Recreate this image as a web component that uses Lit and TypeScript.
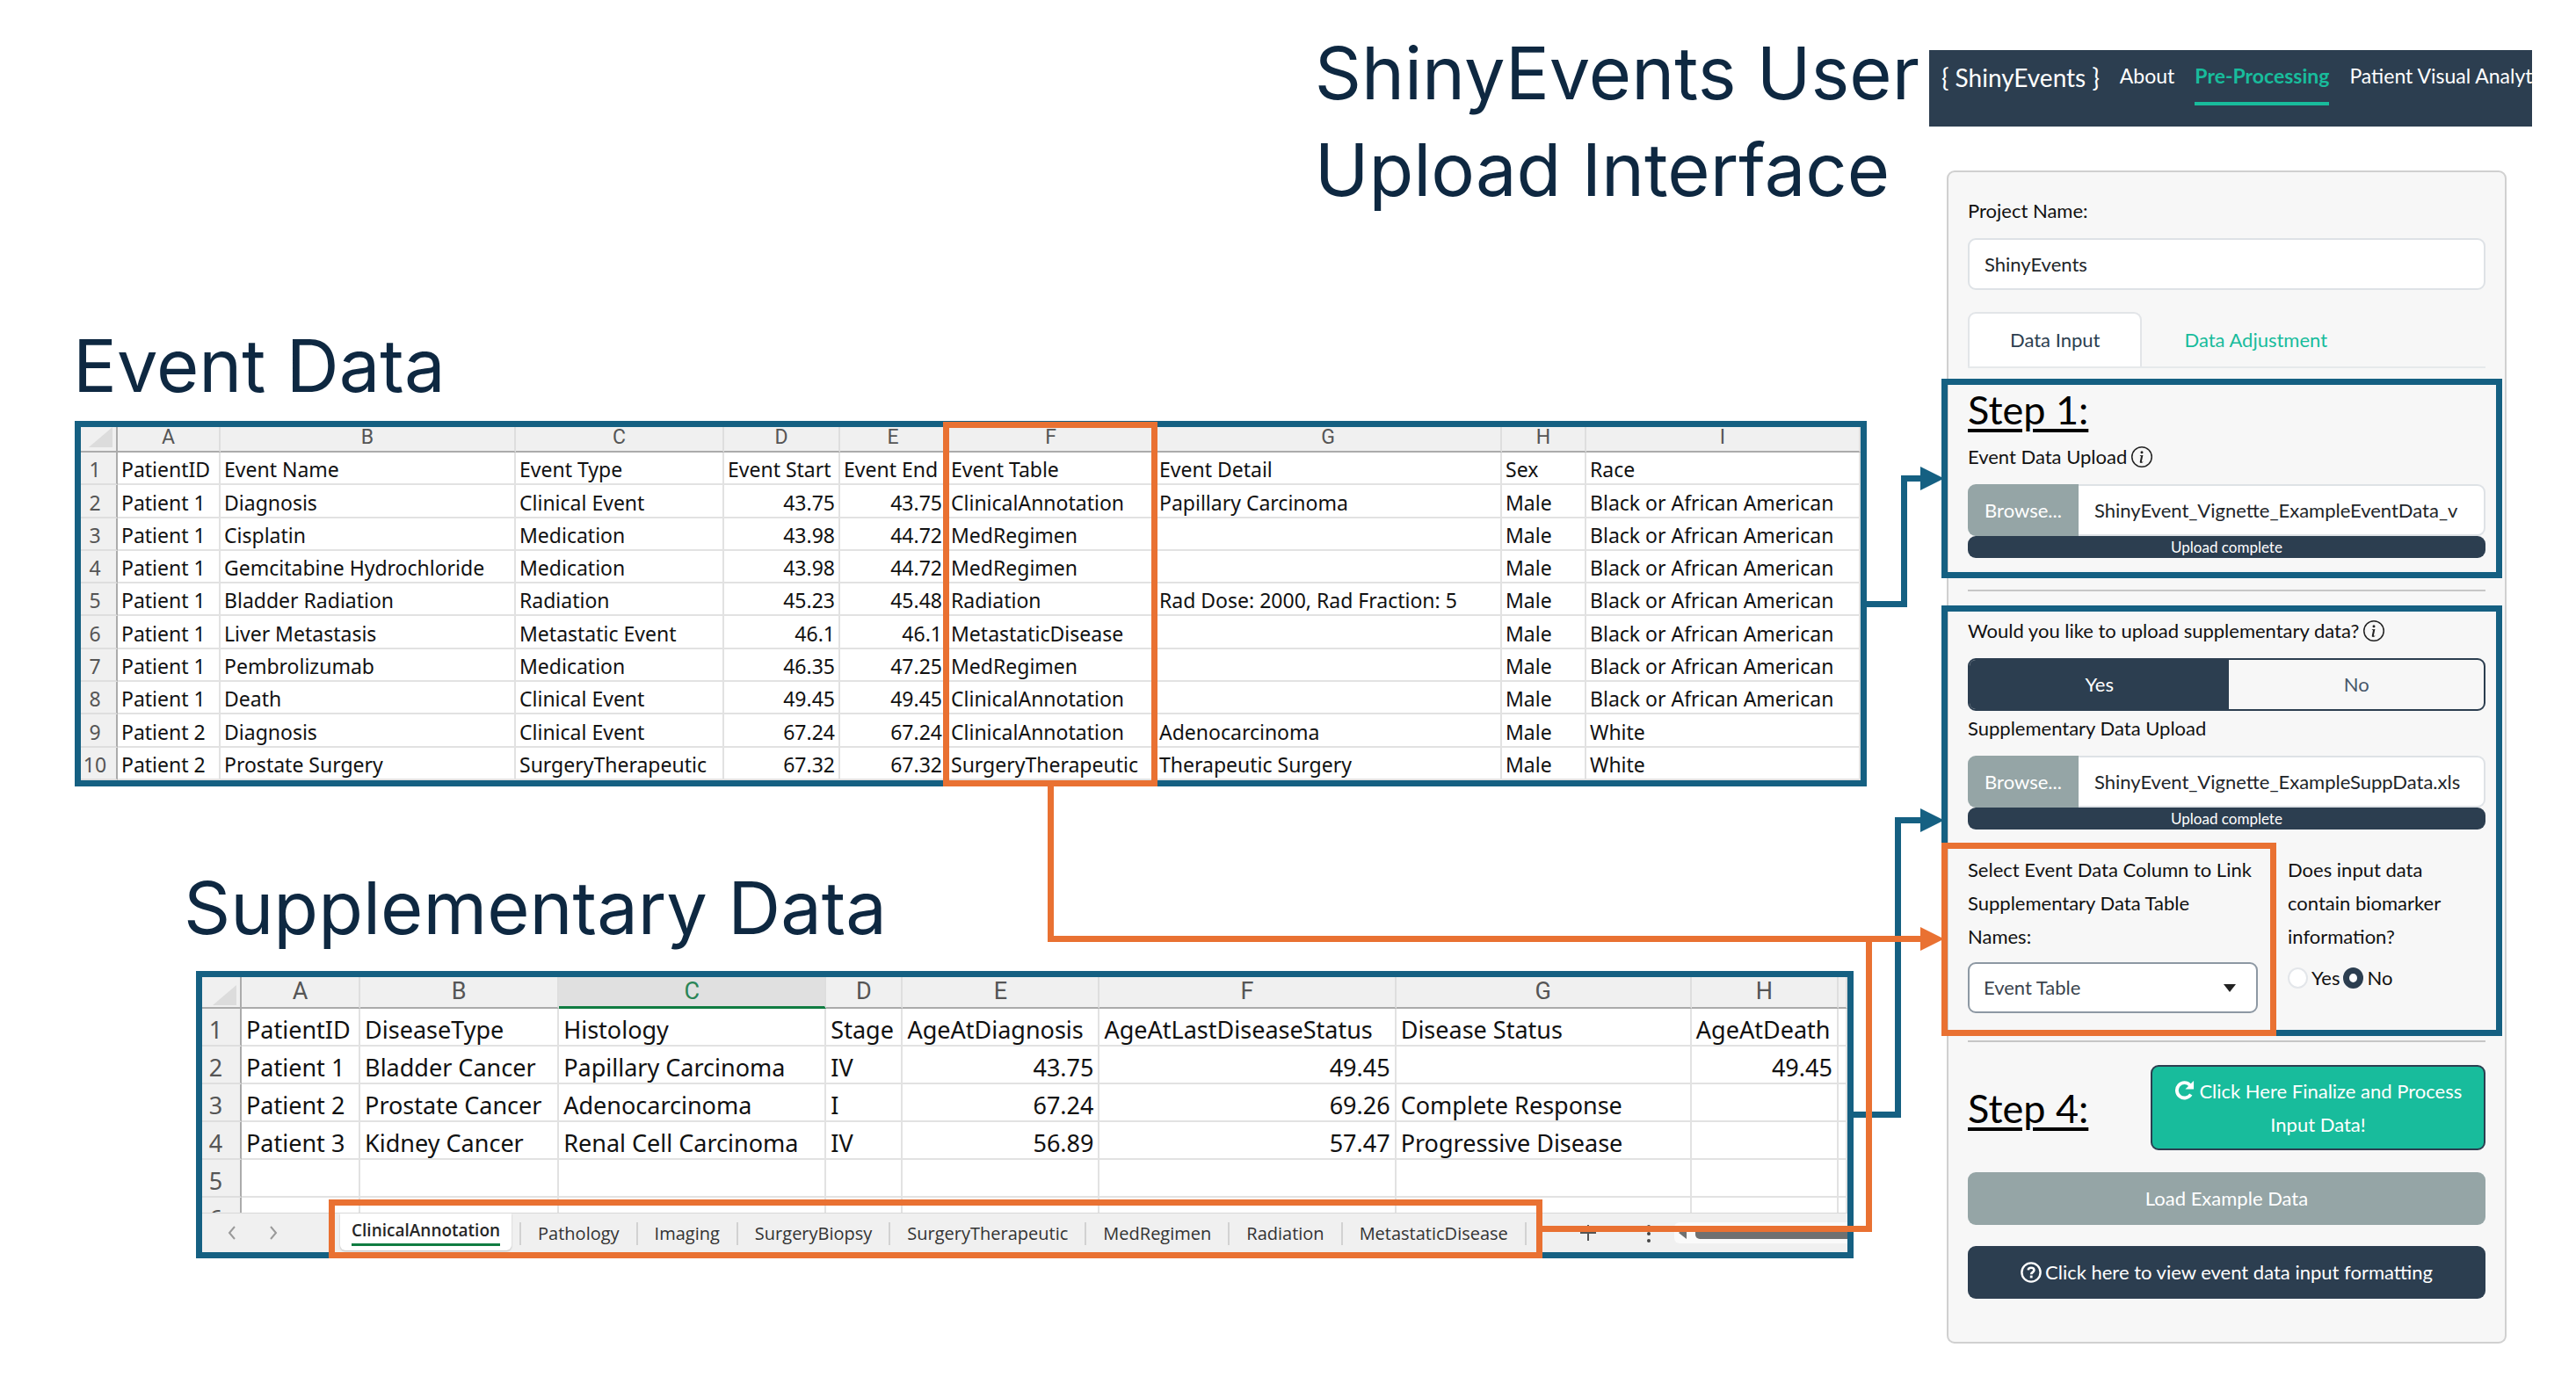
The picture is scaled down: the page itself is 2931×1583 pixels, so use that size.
import { LitElement, html, css, svg, nothing } from "lit";
import { customElement, property, state } from "lit/decorators.js";
import { classMap } from "lit/directives/class-map.js";

interface Column {
  letter: string;
  width: number;
  numeric?: boolean;
  selected?: boolean;
}

const EVENT_COLUMNS: Column[] = [
  { letter: "A", width: 117 },
  { letter: "B", width: 336 },
  { letter: "C", width: 237 },
  { letter: "D", width: 132, numeric: true },
  { letter: "E", width: 122, numeric: true },
  { letter: "F", width: 237 },
  { letter: "G", width: 394 },
  { letter: "H", width: 96 },
  { letter: "I", width: 312 },
];

const BLACK = "Black or African American";

const EVENT_ROWS: string[][] = [
  ["PatientID", "Event Name", "Event Type", "Event Start", "Event End", "Event Table", "Event Detail", "Sex", "Race"],
  ["Patient 1", "Diagnosis", "Clinical Event", "43.75", "43.75", "ClinicalAnnotation", "Papillary Carcinoma", "Male", BLACK],
  ["Patient 1", "Cisplatin", "Medication", "43.98", "44.72", "MedRegimen", "", "Male", BLACK],
  ["Patient 1", "Gemcitabine Hydrochloride", "Medication", "43.98", "44.72", "MedRegimen", "", "Male", BLACK],
  ["Patient 1", "Bladder Radiation", "Radiation", "45.23", "45.48", "Radiation", "Rad Dose: 2000, Rad Fraction: 5", "Male", BLACK],
  ["Patient 1", "Liver Metastasis", "Metastatic Event", "46.1", "46.1", "MetastaticDisease", "", "Male", BLACK],
  ["Patient 1", "Pembrolizumab", "Medication", "46.35", "47.25", "MedRegimen", "", "Male", BLACK],
  ["Patient 1", "Death", "Clinical Event", "49.45", "49.45", "ClinicalAnnotation", "", "Male", BLACK],
  ["Patient 2", "Diagnosis", "Clinical Event", "67.24", "67.24", "ClinicalAnnotation", "Adenocarcinoma", "Male", "White"],
  ["Patient 2", "Prostate Surgery", "SurgeryTherapeutic", "67.32", "67.32", "SurgeryTherapeutic", "Therapeutic Surgery", "Male", "White"],
];

const SUPP_COLUMNS: Column[] = [
  { letter: "A", width: 135 },
  { letter: "B", width: 226 },
  { letter: "C", width: 304, selected: true },
  { letter: "D", width: 87 },
  { letter: "E", width: 224, numeric: true },
  { letter: "F", width: 337, numeric: true },
  { letter: "G", width: 336 },
  { letter: "H", width: 167, numeric: true },
  { letter: "", width: 10 },
];

const SUPP_ROWS: string[][] = [
  ["PatientID", "DiseaseType", "Histology", "Stage", "AgeAtDiagnosis", "AgeAtLastDiseaseStatus", "Disease Status", "AgeAtDeath", ""],
  ["Patient 1", "Bladder Cancer", "Papillary Carcinoma", "IV", "43.75", "49.45", "", "49.45", ""],
  ["Patient 2", "Prostate Cancer", "Adenocarcinoma", "I", "67.24", "69.26", "Complete Response", "", ""],
  ["Patient 3", "Kidney Cancer", "Renal Cell Carcinoma", "IV", "56.89", "57.47", "Progressive Disease", "", ""],
  ["", "", "", "", "", "", "", "", ""],
  ["", "", "", "", "", "", "", "", ""],
];

const SHEETS = [
  "ClinicalAnnotation",
  "Pathology",
  "Imaging",
  "SurgeryBiopsy",
  "SurgeryTherapeutic",
  "MedRegimen",
  "Radiation",
  "MetastaticDisease",
];

@customElement("sheet-grid")
export class SheetGrid extends LitElement {
  @property({ attribute: false }) columns: Column[] = [];
  @property({ attribute: false }) rows: string[][] = [];
  @property({ type: Number }) gutter = 42;
  @property() size = "small";

  static styles = css`
    :host {
      display: block;
      font-family: "Noto Sans", "Open Sans", sans-serif;
      color: #111;
      background: #fff;
    }
    table {
      width: 100%;
      table-layout: fixed;
      border-collapse: separate;
      border-spacing: 0;
    }
    .small {
      height: 402px;
      font-size: 23px;
      line-height: 32px;
    }
    .large {
      font-size: 27px;
      line-height: 34px;
    }
    th {
      padding: 0;
      font-weight: 400;
      color: #555;
      background: #f0f0f0;
      border-right: 2px solid #dedede;
      border-bottom: 2px solid #dedede;
      white-space: nowrap;
    }
    thead th {
      box-sizing: border-box;
      border-bottom-color: #ababab;
      font-family: Roboto, sans-serif;
    }
    .small thead th {
      height: 27px;
      line-height: 23px;
      padding-bottom: 4px;
    }
    .large thead th {
      height: 36px;
      line-height: 31px;
      padding-bottom: 2px;
    }
    tbody th,
    .corner {
      border-right-color: #ababab;
    }
    .corner {
      vertical-align: bottom;
    }
    .corner svg {
      display: block;
      margin-left: auto;
      margin-right: 4px;
      width: 27px;
      height: 23px;
    }
    td {
      padding: 0 4px;
      vertical-align: bottom;
      white-space: nowrap;
      border-right: 2px solid #e2e2e2;
      border-bottom: 2px solid #e2e2e2;
    }
    tbody th {
      vertical-align: bottom;
      padding-right: 8px;
    }
    .large td,
    .large tbody th {
      height: 41px;
      box-sizing: content-box;
    }
    .large td {
      padding: 0 5px;
    }
    .large tbody th {
      padding-right: 12px;
    }
    .numeric {
      text-align: right;
    }
    .large th.selected {
      color: #2a8556;
      background: #e0e0e0;
      border-bottom: 3px solid #107c41;
      padding-bottom: 1px;
    }
  `;

  render() {
    const total = this.gutter + this.columns.reduce((sum, c) => sum + c.width, 0);
    const share = (w: number) => `width:${(w / total) * 100}%`;
    return html`<table class=${this.size}>
      <colgroup>
        <col style=${share(this.gutter)} />
        ${this.columns.map((c) => html`<col style=${share(c.width)} />`)}
      </colgroup>
      <thead>
        <tr>
          <th class="corner">
            <svg viewBox="0 0 27 24" preserveAspectRatio="none" aria-hidden="true">
              <path d="M27 0V24H0Z" fill="#dcdcdc" />
            </svg>
          </th>
          ${this.columns.map(
            (c) => html`<th scope="col" class=${classMap({ selected: !!c.selected })}>${c.letter}</th>`,
          )}
        </tr>
      </thead>
      <tbody>
        ${this.rows.map(
          (row, r) => html`<tr>
            <th scope="row">${r + 1}</th>
            ${row.map(
              (cell, i) =>
                html`<td class=${classMap({ numeric: r > 0 && !!this.columns[i].numeric })}>${cell}</td>`,
            )}
          </tr>`,
        )}
      </tbody>
    </table>`;
  }
}

@customElement("sheet-tabs")
export class SheetTabs extends LitElement {
  @state() private active = 0;

  static styles = css`
    :host {
      display: flex;
      height: 45px;
      background: #f0f0f0;
      border-top: 1px solid #d8d8d8;
      box-sizing: border-box;
      font-family: "Open Sans", "Noto Sans", sans-serif;
      font-size: 20px;
      overflow: hidden;
    }
    button {
      border: 0;
      background: none;
      padding: 0;
      font: inherit;
      color: #333;
    }
    .arrows {
      flex: 0 0 157px;
      display: flex;
      align-items: center;
      padding-left: 27px;
      gap: 37px;
      box-sizing: border-box;
    }
    svg {
      display: block;
    }
    .tabs {
      display: flex;
      align-items: flex-start;
    }
    .tab {
      box-sizing: border-box;
      margin-top: 10px;
      height: 26px;
      padding: 0 19px;
      line-height: 26px;
      border-right: 2px solid #d2d2d2;
      white-space: nowrap;
    }
    .tab.active {
      margin-top: 0;
      margin-right: 9px;
      height: 42px;
      padding: 0 13px;
      background: #fff;
      border: 0;
      border-radius: 0 0 6px 6px;
      box-shadow: 0 1px 2px #bbb;
      font-size: 19px;
      font-weight: 600;
      color: #262626;
    }
    .tab.active + .tab {
      border-left: 2px solid #d2d2d2;
    }
    .tab.active span {
      display: block;
      margin-top: -2px;
      line-height: 30px;
      border-bottom: 3px solid #107c41;
    }
    .tools {
      flex: 1;
      display: flex;
      align-items: center;
      padding-left: 61px;
    }
    .dots {
      margin-left: 57px;
    }
    .bar {
      flex: 1;
      margin-left: 26px;
      height: 24px;
      border-radius: 6px 0 0 6px;
      background: #fafafa;
      display: flex;
      align-items: center;
      gap: 10px;
      padding-left: 5px;
    }
    .thumb {
      flex: 1;
      height: 14px;
      border-radius: 5px 0 0 5px;
      background: #707070;
    }
  `;

  render() {
    return html`<div class="arrows">
        <button aria-label="Previous sheet">
          <svg width="12" height="18" viewBox="0 0 12 18"><path d="M10 2L4 9l6 7" fill="none" stroke="#9a9a9a" stroke-width="2" /></svg>
        </button>
        <button aria-label="Next sheet">
          <svg width="12" height="18" viewBox="0 0 12 18"><path d="M2 2l6 7-6 7" fill="none" stroke="#9a9a9a" stroke-width="2" /></svg>
        </button>
      </div>
      <div class="tabs">
        ${SHEETS.map(
          (name, i) => html`<button
            class=${classMap({ tab: true, active: i === this.active })}
            @click=${() => (this.active = i)}
          ><span>${name}</span></button>`,
        )}
      </div>
      <div class="tools">
        <button aria-label="New sheet">
          <svg width="18" height="18" viewBox="0 0 18 18"><path d="M9 0v18M0 9h18" stroke="#555" stroke-width="2" /></svg>
        </button>
        <svg class="dots" width="6" height="22" viewBox="0 0 6 22" aria-hidden="true">
          <g fill="#444"><circle cx="3" cy="4" r="2" /><circle cx="3" cy="12" r="2" /><circle cx="3" cy="20" r="2" /></g>
        </svg>
        <div class="bar">
          <svg width="9" height="14" viewBox="0 0 9 14" aria-hidden="true"><path d="M9 0v14L0 7z" fill="#707070" /></svg>
          <div class="thumb"></div>
        </div>
      </div>`;
  }
}

const infoIcon = html`<svg class="info" viewBox="0 0 16 16" role="img" aria-label="More information">
  <path
    fill="#222"
    d="M8 15A7 7 0 1 1 8 1a7 7 0 0 1 0 14m0 1A8 8 0 1 0 8 0a8 8 0 0 0 0 16M8.93 6.588l-2.29.287-.082.38.45.083c.294.07.352.176.288.469l-.738 3.468c-.194.897.105 1.319.808 1.319.545 0 1.178-.252 1.465-.598l.088-.416c-.2.176-.492.246-.686.246-.275 0-.375-.193-.304-.533zM9 4.5a1 1 0 1 1-2 0 1 1 0 0 1 2 0"
  />
</svg>`;

@customElement("upload-panel")
export class UploadPanel extends LitElement {
  @state() private supplementary = true;

  static styles = css`
    :host {
      display: block;
      box-sizing: border-box;
      border: 2px solid #d0d0d0;
      border-radius: 9px;
      background: #f7f7f7;
      padding: 25px 22px 49px;
      font-family: Lato, sans-serif;
      font-size: 22px;
      line-height: 38px;
      color: #111;
    }
    button,
    input,
    select {
      font: inherit;
      box-sizing: border-box;
      margin: 0;
    }
    .label {
      display: flex;
      align-items: center;
      gap: 5px;
    }
    .info {
      width: 24px;
      height: 24px;
    }
    .field {
      display: block;
      width: 100%;
      height: 59px;
      padding: 0 17px;
      margin-top: 12px;
      border: 2px solid #dee2e6;
      border-radius: 9px;
      background: #fff;
      color: #212529;
    }
    .tabs {
      display: flex;
      margin-top: 25px;
      border-bottom: 2px solid #e6e9eb;
    }
    .tab {
      height: 62px;
      padding: 0 46px;
      border: 2px solid transparent;
      border-bottom: 0;
      border-radius: 9px 9px 0 0;
      background: none;
      color: #18bc9c;
    }
    .tab.active {
      border-color: #e2e5e8;
      background: #fff;
      color: #2c3e50;
    }
    h2 {
      margin: 0;
      font-size: 45px;
      line-height: 54px;
      font-weight: 400;
      text-decoration: underline;
      text-decoration-thickness: 4px;
      text-underline-offset: 5px;
      color: #000;
      white-space: nowrap;
    }
    .first {
      margin-top: 20px;
      margin-bottom: 8px;
    }
    .file {
      display: flex;
      margin-top: 12px;
    }
    .browse {
      flex: none;
      width: 126px;
      height: 59px;
      border: 0;
      padding: 0;
      border-radius: 9px 0 0 9px;
      background: #95a5a6;
      color: #fff;
    }
    .name {
      flex: 1;
      min-width: 0;
      height: 59px;
      padding: 0 16px 0 18px;
      border: 2px solid #dee2e6;
      border-left: 0;
      border-radius: 0 9px 9px 0;
      background: #fff;
      color: #212529;
    }
    .progress {
      height: 25px;
      border-radius: 9px;
      background: #2c3e50;
      color: #fff;
      font-size: 17px;
      line-height: 25px;
      text-align: center;
    }
    hr {
      height: 2px;
      border: 0;
      background: #c6c6c6;
      margin: 36px 0 26px;
    }
    .last-rule {
      margin-top: 31px;
    }
    .toggle {
      display: grid;
      grid-template-columns: 51fr 50fr;
      margin: 12px 0 1px;
      height: 60px;
      box-sizing: border-box;
      border: 2px solid #2c3e50;
      border-radius: 9px;
      overflow: hidden;
    }
    .toggle button {
      border: 0;
      background: none;
      color: #47586a;
    }
    .toggle .on {
      background: #2c3e50;
      color: #fff;
    }
    .link {
      display: grid;
      grid-template-columns: 330fr 225fr;
      column-gap: 34px;
      margin-top: 27px;
    }
    .link label {
      display: block;
    }
    .select {
      position: relative;
      margin-top: 10px;
    }
    .select select {
      display: block;
      width: 100%;
      height: 58px;
      appearance: none;
      padding: 0 16px;
      border: 2px solid #8d98a3;
      border-radius: 9px;
      background: #fff;
      color: #3a444e;
    }
    .select svg {
      position: absolute;
      right: 25px;
      top: 25px;
      pointer-events: none;
    }
    fieldset {
      border: 0;
      margin: 0;
      padding: 0;
      min-width: 0;
    }
    legend {
      padding: 0;
    }
    .radios {
      display: flex;
      align-items: center;
      gap: 4px;
      margin-top: 9px;
    }
    .radios input {
      appearance: none;
      width: 23px;
      height: 24px;
      flex: none;
      border: 2px solid #e3e6ea;
      border-radius: 50%;
      background: #fff;
    }
    .radios input:checked {
      border: 7px solid #2c3e50;
    }
    .final {
      display: flex;
      justify-content: space-between;
      align-items: center;
    }
    .btn {
      display: flex;
      width: 100%;
      height: 60px;
      align-items: center;
      justify-content: center;
      gap: 4px;
      border: 0;
      border-radius: 9px;
      color: #fff;
    }
    .process {
      display: block;
      width: 381px;
      height: 97px;
      border: 2px solid #2c3e50;
      background: #18bc9c;
      padding: 0;
    }
    .process svg {
      width: 23px;
      height: 23px;
      vertical-align: -2px;
    }
    .example {
      margin-top: 25px;
      background: #95a5a6;
    }
    .format {
      margin-top: 24px;
      background: #2c3e50;
    }
    .format svg {
      width: 24px;
      height: 24px;
    }
  `;

  private upload(id: string, name: string) {
    return html`<div class="file">
        <button class="browse">Browse...</button>
        <input class="name" id=${id} type="text" readonly .value=${name} />
      </div>
      <div class="progress" role="progressbar" aria-valuenow="100">Upload complete</div>`;
  }

  render() {
    return html`
      <label class="label" for="project">Project Name:</label>
      <input class="field" id="project" type="text" value="ShinyEvents" />
      <div class="tabs">
        <button class="tab active">Data Input</button>
        <button class="tab">Data Adjustment</button>
      </div>
      <h2 class="first">Step 1:</h2>
      <label class="label" for="event-file">Event Data Upload ${infoIcon}</label>
      ${this.upload("event-file", "ShinyEvent_Vignette_ExampleEventData_v")}
      <hr />
      <div class="label">Would you like to upload supplementary data? ${infoIcon}</div>
      <div class="toggle">
        <button class=${this.supplementary ? "on" : nothing} @click=${() => (this.supplementary = true)}>Yes</button>
        <button class=${this.supplementary ? nothing : "on"} @click=${() => (this.supplementary = false)}>No</button>
      </div>
      <label class="label" for="supp-file">Supplementary Data Upload</label>
      ${this.upload("supp-file", "ShinyEvent_Vignette_ExampleSuppData.xls")}
      <div class="link">
        <div>
          <label for="column">Select Event Data Column to Link Supplementary Data Table<br />Names:</label>
          <div class="select">
            <select id="column">
              <option>Event Table</option>
            </select>
            <svg width="14" height="9" viewBox="0 0 14 9" aria-hidden="true"><path d="M0 0h14L7 9z" fill="#222" /></svg>
          </div>
        </div>
        <fieldset>
          <legend>Does input data contain biomarker information?</legend>
          <div class="radios">
            <input type="radio" name="biomarker" id="bio-yes" /><label for="bio-yes">Yes</label>
            <input type="radio" name="biomarker" id="bio-no" checked /><label for="bio-no">No</label>
          </div>
        </fieldset>
      </div>
      <hr class="last-rule" />
      <div class="final">
        <h2>Step 4:</h2>
        <button class="btn process">
          <svg viewBox="0 0 24 24" aria-hidden="true">
            <path d="M19.6 17.2A9 9 0 1 1 18.6 6.2" fill="none" stroke="#fff" stroke-width="4" />
            <path d="M23 1v10H13z" fill="#fff" />
          </svg>
          Click Here Finalize and Process Input Data!
        </button>
      </div>
      <button class="btn example">Load Example Data</button>
      <button class="btn format">
        <svg viewBox="0 0 24 24" aria-hidden="true">
          <circle cx="12" cy="12" r="10.6" fill="none" stroke="#fff" stroke-width="2.4" />
          <path d="M8.7 9.4C8.9 7.6 10.2 6.8 12 6.8c2 0 3.4 1 3.4 2.7 0 2.4-3.2 2.4-3.2 4.7" fill="none" stroke="#fff" stroke-width="2.6" />
          <rect x="10.8" y="15.6" width="2.8" height="2.8" fill="#fff" />
        </svg>
        Click here to view event data input formatting
      </button>
    `;
  }
}

@customElement("app-root")
export class AppRoot extends LitElement {
  static styles = css`
    :host {
      display: block;
      background: #fff;
    }
    .page {
      position: relative;
      display: grid;
      grid-template-columns: 2195fr 736fr;
      padding-bottom: 54px;
    }
    .left,
    .right {
      min-width: 0;
    }
    h1 {
      margin: 0;
      font-family: Inter, sans-serif;
      font-size: 83px;
      line-height: 100px;
      font-weight: 400;
      color: #0e2841;
      white-space: nowrap;
    }
    .title {
      width: fit-content;
      margin: 28px 11px 0 auto;
      line-height: 110px;
    }
    .event-title {
      margin: 118px 0 13px 83px;
    }
    .supp-title {
      margin: 88px 0 22px 209px;
    }
    .frame {
      border: 7px solid #156082;
      overflow: hidden;
    }
    .event {
      margin: 0 71px 0 85px;
    }
    .supp {
      margin: 0 86px 0 223px;
    }
    .clip {
      height: 268px;
      overflow: hidden;
    }
    nav {
      display: flex;
      align-items: flex-start;
      gap: 23px;
      margin: 57px 50px 50px 0;
      height: 87px;
      box-sizing: border-box;
      padding: 12px 0 0 14px;
      background: #2c3e50;
      overflow: hidden;
      font-family: Lato, sans-serif;
      font-size: 23px;
      line-height: 34px;
      white-space: nowrap;
    }
    nav a {
      color: #fff;
      text-decoration: none;
    }
    .brand {
      font-size: 28px;
      line-height: 38px;
    }
    nav .current {
      color: #18bc9c;
      font-weight: 700;
      padding-bottom: 13px;
      border-bottom: 4px solid #18bc9c;
    }
    upload-panel {
      margin: 0 79px 0 20px;
    }
    .links {
      position: absolute;
      left: 0;
      top: 0;
      width: 100%;
      height: 1583px;
      pointer-events: none;
    }
  `;

  private overlay() {
    const blue = "#156082";
    const orange = "#e97132";
    const box = (x: number, y: number, w: number, h: number, color: string) =>
      svg`<rect x=${x + 3.5} y=${y + 3.5} width=${w - 7} height=${h - 7} fill="none" stroke=${color} stroke-width="7" />`;
    const wire = (d: string, color: string) => svg`<path d=${d} fill="none" stroke=${color} stroke-width="7" />`;
    const head = (y: number, color: string) =>
      svg`<path d=${`M2185 ${y - 13.5}L2212 ${y}L2185 ${y + 13.5}Z`} fill=${color} />`;
    return html`<svg class="links" viewBox="0 0 2931 1583" preserveAspectRatio="none" aria-hidden="true">
      ${wire("M2123 687.5H2166.5V544.5H2188", blue)} ${head(544.5, blue)}
      ${wire("M2108 1268.5H2159.5V933.5H2188", blue)} ${head(933.5, blue)}
      ${box(2209, 431, 638, 227, blue)} ${box(2209, 689, 638, 490, blue)}
      ${box(2209, 959, 381, 220, orange)} ${box(1073, 480, 244, 415, orange)}
      ${box(374, 1365, 1381, 67, orange)}
      ${wire("M1195.5 894V1068.5H2188", orange)} ${wire("M1754 1398.5H2126.5V1068.5", orange)}
      ${head(1068.5, orange)}
    </svg>`;
  }

  render() {
    return html`<div class="page">
      <div class="left">
        <h1 class="title">ShinyEvents User<br />Upload Interface</h1>
        <h1 class="event-title">Event Data</h1>
        <div class="frame event">
          <sheet-grid .columns=${EVENT_COLUMNS} .rows=${EVENT_ROWS}></sheet-grid>
        </div>
        <h1 class="supp-title">Supplementary Data</h1>
        <div class="frame supp">
          <div class="clip">
            <sheet-grid size="large" gutter="45" .columns=${SUPP_COLUMNS} .rows=${SUPP_ROWS}></sheet-grid>
          </div>
          <sheet-tabs></sheet-tabs>
        </div>
      </div>
      <div class="right">
        <nav>
          <a class="brand" href="#">{ ShinyEvents }</a>
          <a href="#about">About</a>
          <a class="current" href="#pre">Pre-Processing</a>
          <a href="#visual">Patient Visual Analyt</a>
        </nav>
        <upload-panel></upload-panel>
      </div>
      ${this.overlay()}
    </div>`;
  }
}
